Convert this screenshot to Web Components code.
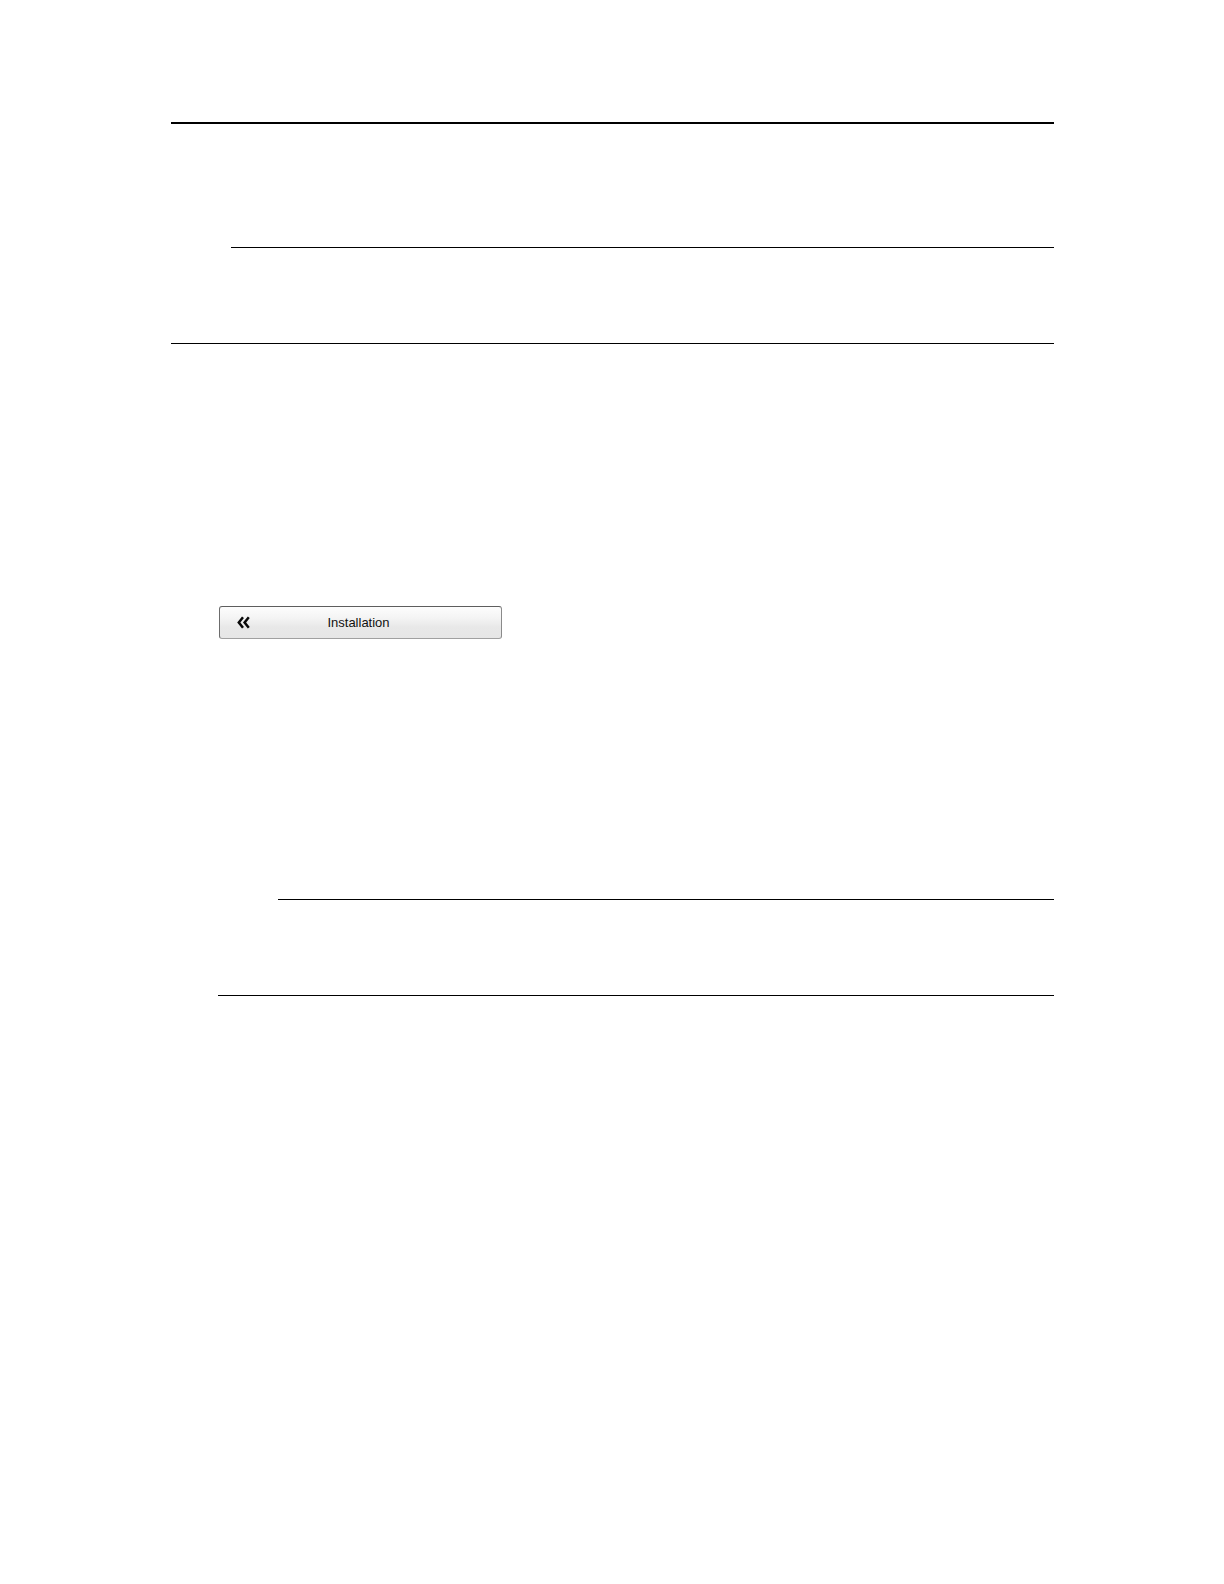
<!DOCTYPE html>
<html lang="en">
<head>
<meta charset="utf-8">
<meta name="viewport" content="width=device-width, initial-scale=1">
<title>Installation</title>
<style>
body { margin: 0; background: #fff; color: #000; font-family: "Liberation Sans", Arial, sans-serif; }
</style>
</head>
<body>
<manual-page>
  <header-rule></header-rule>
  <note-frame></note-frame>
  <menu-step>
    <back-button>Installation</back-button>
    <note-frame></note-frame>
  </menu-step>
</manual-page>
<script>
function define(name, markup) {
  const template = document.createElement('template');
  template.innerHTML = markup;
  customElements.define(name, class extends HTMLElement {
    constructor() {
      super();
      this.attachShadow({ mode: 'open' }).append(template.content.cloneNode(true));
    }
  });
}

define('manual-page', `
  <style>
    :host { display: block; }
    main { display: flex; flex-direction: column; padding: 122px 170px 122px 171px; }
  </style>
  <main><slot></slot></main>`);

define('header-rule', `
  <style>
    :host { display: block; border-top: 2px solid #000; margin-bottom: 123px; }
  </style>`);

// A note area: an indented top rule and a full-width bottom rule.
define('note-frame', `
  <style>
    :host { display: flex; flex-direction: column; gap: 95px; }
    .top, .bottom { border-top: 1px solid #000; }
    .top { margin-left: 60px; }
  </style>
  <div class="top"></div>
  <slot></slot>
  <div class="bottom"></div>`);

// Steps sit one indent in from the page's text column.
define('menu-step', `
  <style>
    :host { display: flex; flex-direction: column; gap: 260px; margin: 262px 0 0 47px; }
  </style>
  <slot></slot>`);

define('back-button', `
  <style>
    :host { display: block; margin-left: 1px; }
    button {
      display: flex; align-items: center; box-sizing: border-box;
      width: 283px; max-width: 100%; height: 33px; margin: 0; padding: 0 34px 0 17px;
      border: 1px solid #8a8a8a; border-top-color: #5e5e5e; border-left-color: #6c6c6c;
      border-bottom-color: #a0a0a0; border-radius: 3px;
      background: linear-gradient(#fdfdfd, #f4f4f4 35%, #e8e8e8 65%, #e6e6e6);
      color: #111; font: 13px/16px "Liberation Sans", Arial, sans-serif;
    }
    svg { flex: none; display: block; }
    .label { flex: 1; text-align: center; }
  </style>
  <button type="button">
    <svg width="13" height="13" viewBox="0 0 13 13" aria-hidden="true">
      <path d="M6 1.3 1.8 6.5 6 11.7M11.8 1.3 7.6 6.5l4.2 5.2" fill="none" stroke="#0a0a0a" stroke-width="2.5"/>
    </svg>
    <span class="label"><slot></slot></span>
  </button>`);
</script>
</body>
</html>
